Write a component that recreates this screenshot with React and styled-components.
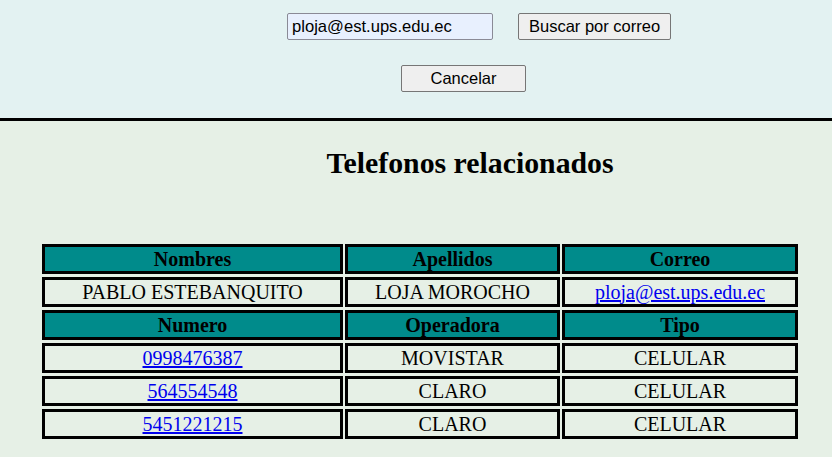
import React from "react";
import styled, { createGlobalStyle } from "styled-components";

const Global = createGlobalStyle`
  html, body { margin: 0; padding: 0; }
  body {
    background: #e6f0e6;
    font-family: "Liberation Serif", "Times New Roman", serif;
    color: #000;
  }
`;

const Header = styled.header`
  background: #e3f2f2;
  border-bottom: 3px solid #000;
  height: 118px;
  box-sizing: content-box;
  display: flex;
  flex-direction: column;
`;

const SearchRow = styled.div`
  display: flex;
  align-items: center;
  gap: 25px;
  padding: 13px 0 0 287px;
`;

const CancelRow = styled.div`
  display: flex;
  padding: 25px 0 0 401px;
`;

const EmailInput = styled.input`
  box-sizing: border-box;
  width: 206px;
  height: 27px;
  padding: 0 4px;
  border: 1px solid #8a8a96;
  border-radius: 2px;
  background: #e8f0fe;
  font-family: "Liberation Sans", Arial, sans-serif;
  font-size: 16.6px;
  color: #000;
  outline: none;
`;

const Button = styled.button`
  box-sizing: border-box;
  height: 27px;
  width: ${(p) => (p.$w ? `${p.$w}px` : "auto")};
  padding: 0 10px;
  border: 1px solid #767676;
  border-radius: 2px;
  background: #efefef;
  font-family: "Liberation Sans", Arial, sans-serif;
  font-size: 16.5px;
  color: #000;
  cursor: pointer;
`;

const Main = styled.main`
  display: flex;
  flex-direction: column;
`;

const Title = styled.h1`
  margin: 25px 0 0 0;
  padding-left: 108px;
  text-align: center;
  font-size: 29.8px;
  line-height: 33px;
  font-weight: bold;
`;

const Grid = styled.div`
  display: grid;
  grid-template-columns: 301px 215px 236px;
  column-gap: 2px;
  row-gap: 3px;
  margin: 65px 0 0 42px;
`;

const Cell = styled.div`
  box-sizing: border-box;
  height: 30px;
  border: 3px solid #000;
  background: ${(p) => (p.$head ? "#008b8b" : "transparent")};
  font-weight: ${(p) => (p.$head ? "bold" : "normal")};
  font-size: 20px;
  display: flex;
  align-items: center;
  justify-content: center;
  white-space: nowrap;
`;

const Link = styled.a`
  color: #0000ee;
  text-decoration: underline;
`;

const phones = [
  { num: "0998476387", op: "MOVISTAR", tipo: "CELULAR" },
  { num: "564554548", op: "CLARO", tipo: "CELULAR" },
  { num: "5451221215", op: "CLARO", tipo: "CELULAR" },
];

export default function App() {
  return (
    <>
      <Global />
      <Header>
        <SearchRow>
          <EmailInput defaultValue="ploja@est.ups.edu.ec" />
          <Button>Buscar por correo</Button>
        </SearchRow>
        <CancelRow>
          <Button $w={125}>Cancelar</Button>
        </CancelRow>
      </Header>
      <Main>
        <Title>Telefonos relacionados</Title>
        <Grid>
          <Cell $head>Nombres</Cell>
          <Cell $head>Apellidos</Cell>
          <Cell $head>Correo</Cell>
          <Cell>PABLO ESTEBANQUITO</Cell>
          <Cell>LOJA MOROCHO</Cell>
          <Cell>
            <Link href="#">ploja@est.ups.edu.ec</Link>
          </Cell>
          <Cell $head>Numero</Cell>
          <Cell $head>Operadora</Cell>
          <Cell $head>Tipo</Cell>
          {phones.map((p) => (
            <React.Fragment key={p.num}>
              <Cell>
                <Link href="#">{p.num}</Link>
              </Cell>
              <Cell>{p.op}</Cell>
              <Cell>{p.tipo}</Cell>
            </React.Fragment>
          ))}
        </Grid>
      </Main>
    </>
  );
}
